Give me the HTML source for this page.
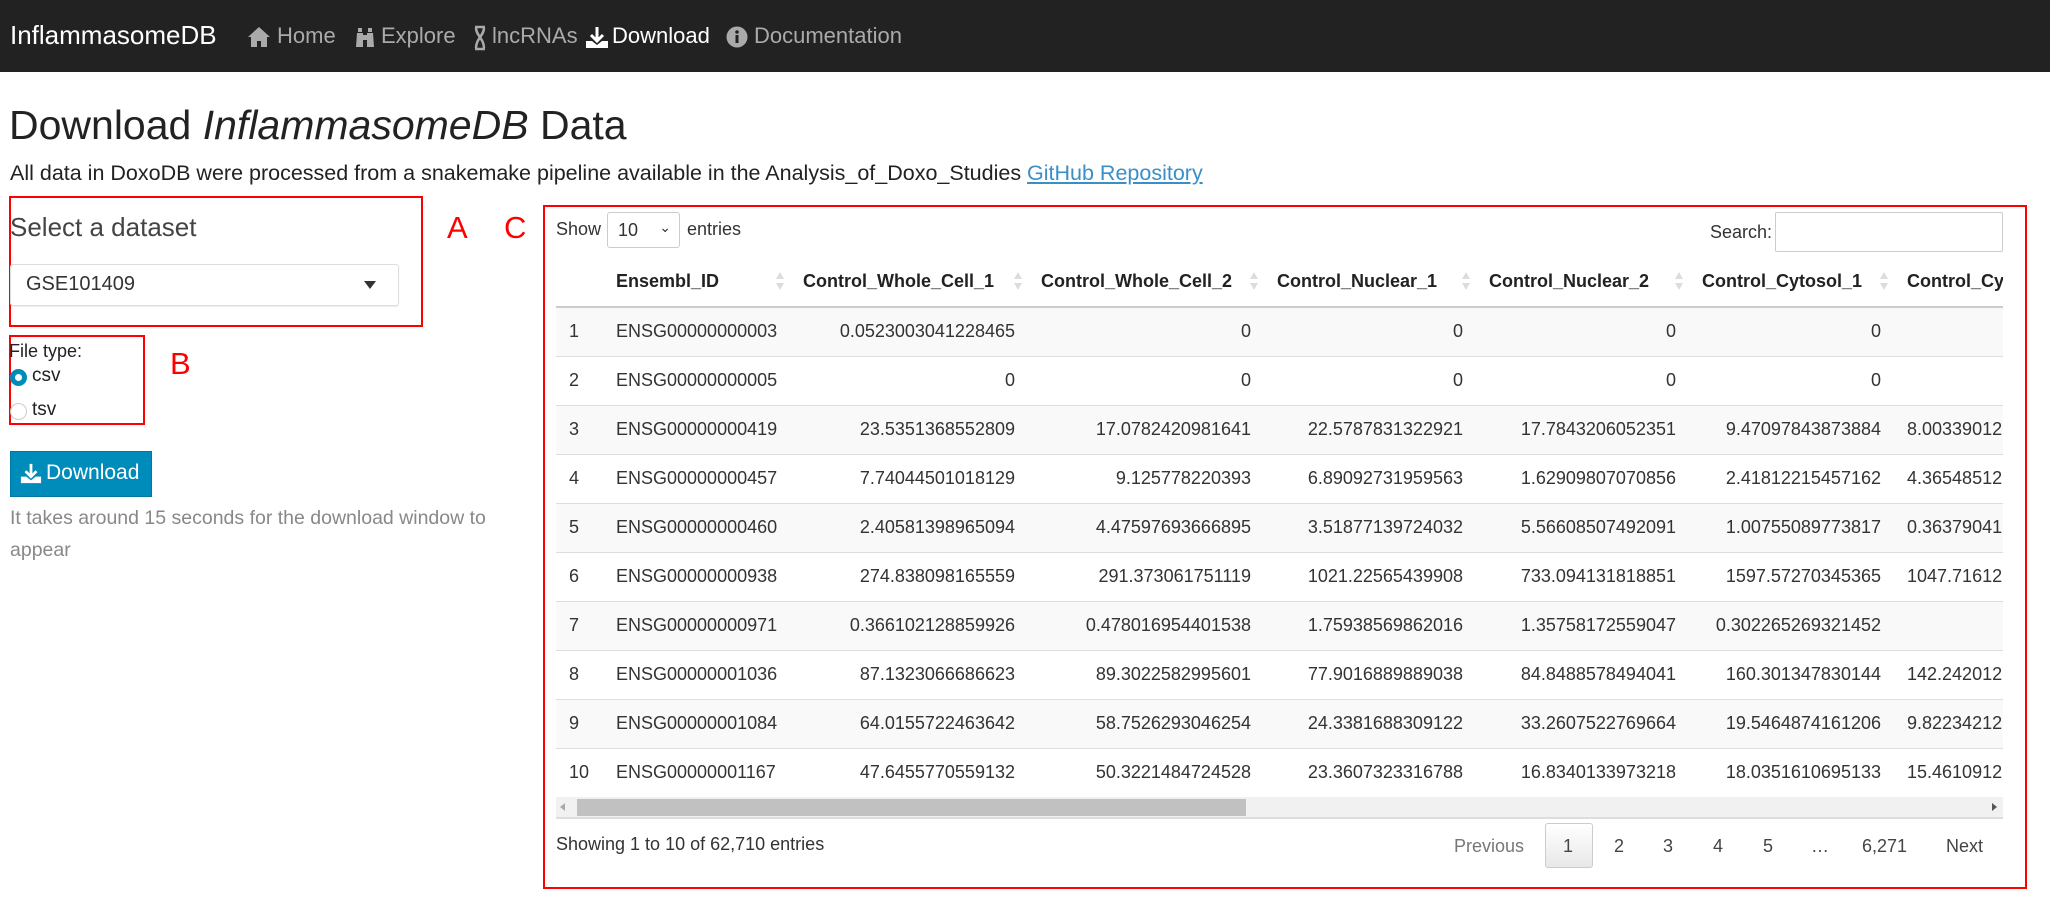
<!DOCTYPE html>
<html><head><meta charset="utf-8">
<style>
*{box-sizing:border-box;margin:0;padding:0}
body{width:2050px;height:921px;overflow:hidden;background:#fff;font-family:"Liberation Sans",sans-serif;color:#333;position:relative}
.abs{position:absolute;white-space:nowrap}
.nav{position:absolute;left:0;top:0;width:2050px;height:72px;background:#222}
.nav .it{position:absolute;top:22px;font-size:22px;color:#aaa;line-height:28px}
.red{position:absolute;border:2px solid #f00}
.lbl{position:absolute;color:#f00;font-size:31px}
table{border-collapse:collapse;position:absolute;left:556px;top:256px;font-size:18px;table-layout:fixed;width:1498px}
td,th{height:49px;padding:0 13px;white-space:nowrap;overflow:hidden}
th{text-align:left;font-weight:bold;color:#222;position:relative;height:51px;border-bottom:2px solid #ccc}
th .s{position:absolute;right:6px;top:16px;width:8px;height:20px}
th .s:before{content:"";position:absolute;left:0;top:0;border:4px solid transparent;border-bottom:7px solid #ddd;border-top:0}
th .s:after{content:"";position:absolute;left:0;top:11px;border:4px solid transparent;border-top:7px solid #ddd;border-bottom:0}
td{text-align:right;border-top:1px solid #ddd}
td.l{text-align:left}
tr.o td{background:#f9f9f9}
.pg{position:absolute;top:836px;font-size:18px;color:#444}
</style></head><body>
<div class="nav">
<div class="abs" style="left:10px;top:20px;font-size:26px;color:#fff">InflammasomeDB</div>
<svg class="abs" style="left:247px;top:26px" width="24" height="22" viewBox="0 0 24 22"><path d="M12 1 L1 11 H4 V21 H10 V15 H14 V21 H20 V11 H23 Z" fill="#aaa"/></svg>
<div class="it" style="left:277px">Home</div>
<svg class="abs" style="left:353px;top:25px" width="24" height="24" viewBox="0 0 24 24"><path d="M3 22 L4 8 H10 V22 Z M14 22 V8 H20 L21 22 Z M5 7 V3 H9 V7 Z M15 7 V3 H19 V7 Z M10 10 H14 V15 H10Z" fill="#aaa"/></svg>
<div class="it" style="left:381px">Explore</div>
<svg class="abs" style="left:473px;top:25px" width="14" height="26" viewBox="0 0 14 26"><path d="M2 2 H12 M2 24 H12 M3 3 C3 10 11 14 11 23 M11 3 C11 10 3 14 3 23" stroke="#aaa" stroke-width="2.5" fill="none"/></svg>
<div class="it" style="left:492px">lncRNAs</div>
<svg class="abs" style="left:585px;top:25px" width="24" height="24" viewBox="0 0 24 24"><path d="M12 2 V15 M6 10 L12 16 L18 10" stroke="#fff" stroke-width="3" fill="none"/><path d="M1 16 H7 L12 20 L17 16 H23 V23 H1 Z" fill="#fff"/></svg>
<div class="it" style="left:612px;color:#fff">Download</div>
<svg class="abs" style="left:726px;top:26px" width="22" height="22" viewBox="0 0 22 22"><circle cx="11" cy="11" r="10.5" fill="#aaa"/><rect x="9.5" y="9" width="3" height="8" fill="#222"/><circle cx="11" cy="6" r="1.8" fill="#222"/></svg>
<div class="it" style="left:754px">Documentation</div>
</div>

<div class="abs" style="left:9px;top:102px;font-size:41px;color:#222">Download <i>InflammasomeDB</i> Data</div>
<div class="abs" style="left:10px;top:161px;font-size:21.5px;color:#222">All data in DoxoDB were processed from a snakemake pipeline available in the Analysis_of_Doxo_Studies <span style="color:#3a8fc7;text-decoration:underline">GitHub Repository</span></div>

<div class="red" style="left:9px;top:196px;width:414px;height:131px"></div>
<div class="abs" style="left:10px;top:212px;font-size:26px;color:#444">Select a dataset</div>
<div class="abs" style="left:10px;top:264px;width:389px;height:42px;border:1px solid #ddd;border-radius:3px;box-shadow:0 1px 1px rgba(0,0,0,.08)"></div>
<div class="abs" style="left:26px;top:273px;font-size:20px;color:#333">GSE101409</div>
<div class="abs" style="left:364px;top:281px;border:6px solid transparent;border-top:8px solid #333;border-bottom:0"></div>
<div class="lbl" style="left:447px;top:210px">A</div>
<div class="lbl" style="left:504px;top:210px">C</div>

<div class="red" style="left:9px;top:335px;width:136px;height:90px"></div>
<div class="abs" style="left:9px;top:341px;font-size:18px;color:#222">File type:</div>
<div class="abs" style="left:10px;top:369px;width:17px;height:17px;border-radius:50%;border:5px solid #008cba;background:#fff"></div>
<div class="abs" style="left:32px;top:365px;font-size:19px;color:#222">csv</div>
<div class="abs" style="left:10px;top:403px;width:17px;height:17px;border-radius:50%;border:1px solid #ccc"></div>
<div class="abs" style="left:32px;top:399px;font-size:19px;color:#222">tsv</div>
<div class="lbl" style="left:170px;top:346px">B</div>

<div class="abs" style="left:10px;top:451px;width:142px;height:46px;background:#008cba;border:1px solid #0079a1"></div>
<svg class="abs" style="left:20px;top:462px" width="22" height="22" viewBox="0 0 24 24"><path d="M12 2 V15 M6 10 L12 16 L18 10" stroke="#fff" stroke-width="3" fill="none"/><path d="M1 16 H7 L12 20 L17 16 H23 V23 H1 Z" fill="#fff"/></svg>
<div class="abs" style="left:46px;top:461px;font-size:21px;color:#fff">Download</div>
<div class="abs" style="left:10px;top:502px;font-size:19.5px;color:#888;line-height:32px;white-space:normal;width:500px">It takes around 15 seconds for the download window to appear</div>

<div class="red" style="left:543px;top:205px;width:1484px;height:684px"></div>
<div class="abs" style="left:556px;top:219px;font-size:18px">Show</div>
<div class="abs" style="left:607px;top:212px;width:73px;height:36px;border:1px solid #ccc;border-radius:3px;font-size:18px;padding:7px 10px">10<span style="position:absolute;right:8px;top:6px;font-size:14px">&#8964;</span></div>
<div class="abs" style="left:687px;top:219px;font-size:18px">entries</div>
<div class="abs" style="left:1710px;top:222px;font-size:18px">Search:</div>
<div class="abs" style="left:1775px;top:212px;width:228px;height:40px;border:1px solid #ccc;border-radius:2px"></div>

<div class="abs" style="left:556px;top:256px;width:1447px;height:541px;overflow:hidden">
<table style="left:0;top:0">
<colgroup><col style="width:47px"><col style="width:187px"><col style="width:238px"><col style="width:236px"><col style="width:212px"><col style="width:213px"><col style="width:205px"><col style="width:160px"></colgroup>
<tr><th></th><th>Ensembl_ID<span class="s"></span></th><th>Control_Whole_Cell_1<span class="s"></span></th><th>Control_Whole_Cell_2<span class="s"></span></th><th>Control_Nuclear_1<span class="s"></span></th><th>Control_Nuclear_2<span class="s"></span></th><th>Control_Cytosol_1<span class="s"></span></th><th>Control_Cytosol_2</th></tr>
<tr class="o"><td class="l">1</td><td class="l">ENSG00000000003</td><td>0.0523003041228465</td><td>0</td><td>0</td><td>0</td><td>0</td><td></td></tr>
<tr><td class="l">2</td><td class="l">ENSG00000000005</td><td>0</td><td>0</td><td>0</td><td>0</td><td>0</td><td></td></tr>
<tr class="o"><td class="l">3</td><td class="l">ENSG00000000419</td><td>23.5351368552809</td><td>17.0782420981641</td><td>22.5787831322921</td><td>17.7843206052351</td><td>9.47097843873884</td><td class="l">8.00339012</td></tr>
<tr><td class="l">4</td><td class="l">ENSG00000000457</td><td>7.74044501018129</td><td>9.125778220393</td><td>6.89092731959563</td><td>1.62909807070856</td><td>2.41812215457162</td><td class="l">4.36548512</td></tr>
<tr class="o"><td class="l">5</td><td class="l">ENSG00000000460</td><td>2.40581398965094</td><td>4.47597693666895</td><td>3.51877139724032</td><td>5.56608507492091</td><td>1.00755089773817</td><td class="l">0.36379041</td></tr>
<tr><td class="l">6</td><td class="l">ENSG00000000938</td><td>274.838098165559</td><td>291.373061751119</td><td>1021.22565439908</td><td>733.094131818851</td><td>1597.57270345365</td><td class="l">1047.71612</td></tr>
<tr class="o"><td class="l">7</td><td class="l">ENSG00000000971</td><td>0.366102128859926</td><td>0.478016954401538</td><td>1.75938569862016</td><td>1.35758172559047</td><td>0.302265269321452</td><td></td></tr>
<tr><td class="l">8</td><td class="l">ENSG00000001036</td><td>87.1323066686623</td><td>89.3022582995601</td><td>77.9016889889038</td><td>84.8488578494041</td><td>160.301347830144</td><td class="l">142.242012</td></tr>
<tr class="o"><td class="l">9</td><td class="l">ENSG00000001084</td><td>64.0155722463642</td><td>58.7526293046254</td><td>24.3381688309122</td><td>33.2607522769664</td><td>19.5464874161206</td><td class="l">9.82234212</td></tr>
<tr><td class="l">10</td><td class="l">ENSG00000001167</td><td>47.6455770559132</td><td>50.3221484724528</td><td>23.3607323316788</td><td>16.8340133973218</td><td>18.0351610695133</td><td class="l">15.4610912</td></tr>
</table></div>
<div class="abs" style="left:556px;top:797px;width:1447px;height:22px;background:#f1f1f1;border-bottom:2px solid #ddd"></div>
<div class="abs" style="left:577px;top:799px;width:669px;height:17px;background:#c1c1c1"></div>
<div class="abs" style="left:560px;top:803px;border:4px solid transparent;border-right:5px solid #aaa;border-left:0"></div>
<div class="abs" style="left:1992px;top:803px;border:4px solid transparent;border-left:5px solid #555;border-right:0"></div>

<div class="abs" style="left:556px;top:834px;font-size:18px">Showing 1 to 10 of 62,710 entries</div>
<div class="pg" style="left:1454px;color:#777">Previous</div>
<div class="abs" style="left:1545px;top:823px;width:48px;height:45px;border:1px solid #ccc;border-radius:3px;background:linear-gradient(#fff,#e8e8e8)"></div>
<div class="pg" style="left:1563px">1</div>
<div class="pg" style="left:1614px">2</div>
<div class="pg" style="left:1663px">3</div>
<div class="pg" style="left:1713px">4</div>
<div class="pg" style="left:1763px">5</div>
<div class="pg" style="left:1811px">…</div>
<div class="pg" style="left:1862px">6,271</div>
<div class="pg" style="left:1946px">Next</div>
</body></html>
